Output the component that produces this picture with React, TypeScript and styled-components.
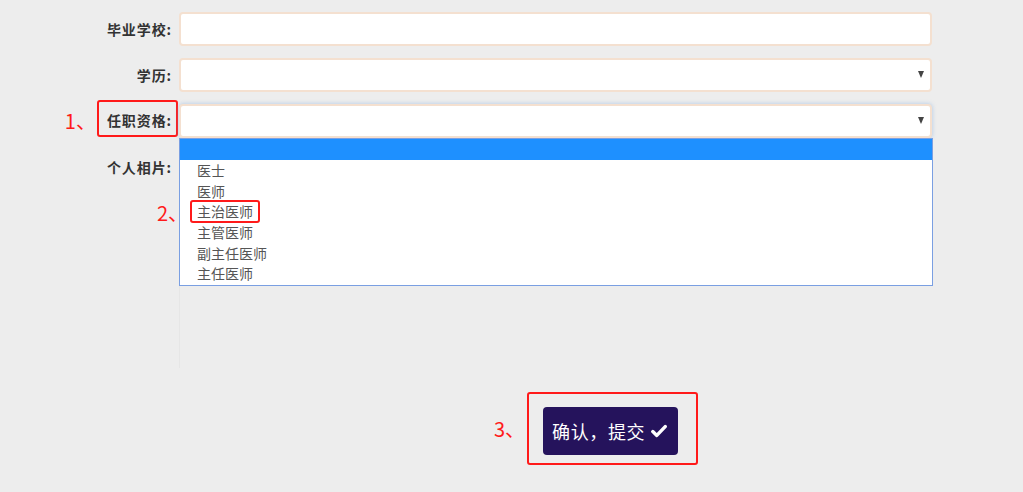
import React from "react";
import styled, { createGlobalStyle } from "styled-components";

const Global = createGlobalStyle`
  html, body { margin: 0; padding: 0; background: #ededed; }
  body { font-family: "Noto Sans CJK SC", "Microsoft YaHei", sans-serif; }
`;

const Page = styled.div`
  width: 1023px;
  height: 492px;
  background: #ededed;
  padding-top: 12px;
  box-sizing: border-box;
  overflow: hidden;
`;

const Row = styled.div`
  position: relative;
  display: grid;
  grid-template-columns: 172px 753px;
  column-gap: 7px;
  margin-bottom: 12px;
`;

const Label = styled.div`
  height: 34px;
  display: flex;
  justify-content: flex-end;
  align-items: center;
  gap: 1px;
  font-size: 14px;
  letter-spacing: 0.9px;
  font-weight: bold;
  color: #333;
  white-space: nowrap;
`;

const Boxed = styled.span`
  align-self: flex-start;
  margin: -4px -6px 0 0;
  height: 37px;
  box-sizing: border-box;
  display: flex;
  align-items: center;
  padding: 2px 4px 0 8px;
  border: 2px solid #ff1a1a;
  border-radius: 3px;
`;

const Note = styled.span`
  color: #ff1a1a;
  font-family: "Noto Sans CJK SC", sans-serif;
  font-size: 20px;
  font-weight: normal;
  letter-spacing: 0;
  line-height: 24px;
  white-space: nowrap;
`;

const FloatNote = styled(Note)`
  position: absolute;
  left: -23px;
  top: 62px;
`;

const Field = styled.div<{ $focus?: boolean }>`
  position: relative;
  height: 34px;
  box-sizing: border-box;
  background: #fff;
  border: 2px solid #f4e0d0;
  border-radius: 4px;
  box-shadow: ${(p) => (p.$focus ? "0 0 4px rgba(120,170,225,0.55)" : "none")};
`;

const Arrow = styled.span`
  position: absolute;
  right: 6px;
  top: 11px;
  width: 0;
  height: 0;
  border-left: 3.5px solid transparent;
  border-right: 3.5px solid transparent;
  border-top: 7px solid #444;
`;

const List = styled.ul`
  position: absolute;
  left: 179px;
  top: 34px;
  width: 754px;
  height: 148px;
  margin: 0;
  padding: 0;
  list-style: none;
  box-sizing: border-box;
  border: 1px solid #7a9fe2;
  background: #fff;
  z-index: 5;
`;

const Option = styled.li<{ $active?: boolean }>`
  height: ${(p) => (p.$active ? "21px" : "20.6px")};
  display: flex;
  align-items: center;
  padding-left: 17px;
  font-size: 14px;
  color: #555;
  background: ${(p) => (p.$active ? "#1e90ff" : "#fff")};
`;

const Picked = styled.span`
  display: inline-flex;
  align-items: center;
  height: 23px;
  box-sizing: border-box;
  margin: 0 -7px;
  padding: 0 5px;
  border: 2px solid #ff1a1a;
  border-radius: 3px;
`;

const PhotoBox = styled.div`
  height: 218px;
  border-left: 1px solid #e6e6e6;
`;

const ButtonRow = styled.div`
  display: flex;
  align-items: center;
  gap: 2px;
  padding-left: 494px;
  margin-top: 24px;
`;

const Frame = styled.div`
  padding: 13px 18px 8px 14px;
  border: 2px solid #ff1a1a;
  border-radius: 3px;
`;

const Submit = styled.button`
  height: 48px;
  width: 135px;
  box-sizing: border-box;
  border: none;
  border-radius: 4px;
  background: #25135c;
  color: #fff;
  font-family: "Noto Sans CJK SC", sans-serif;
  font-size: 18px;
  letter-spacing: 0.6px;
  display: flex;
  align-items: center;
  gap: 6px;
  padding: 0 0 0 9px;
`;

const Check = () => (
  <svg width="16" height="14" viewBox="0 0 16 14">
    <path d="M1.8 7.6 L5.8 11.4 L14.2 2.6" stroke="#fff" strokeWidth="3.4" fill="none" strokeLinecap="round" strokeLinejoin="round" />
  </svg>
);

const options = ["医士", "医师", "主治医师", "主管医师", "副主任医师", "主任医师"];

export default function App() {
  return (
    <Page>
      <Global />
      <Row>
        <Label>毕业学校:</Label>
        <Field />
      </Row>
      <Row>
        <Label>学历:</Label>
        <Field>
          <Arrow />
        </Field>
      </Row>
      <Row>
        <Label>
          <Note>1、</Note>
          <Boxed>任职资格:</Boxed>
        </Label>
        <Field $focus>
          <Arrow />
        </Field>
        <List>
          <FloatNote>2、</FloatNote>
          <Option $active />
          {options.map((o) => (
            <Option key={o}>{o === "主治医师" ? <Picked>{o}</Picked> : o}</Option>
          ))}
        </List>
      </Row>
      <Row>
        <Label>个人相片:</Label>
        <PhotoBox />
      </Row>
      <ButtonRow>
        <Note>3、</Note>
        <Frame>
          <Submit>
            确认，提交
            <Check />
          </Submit>
        </Frame>
      </ButtonRow>
    </Page>
  );
}
